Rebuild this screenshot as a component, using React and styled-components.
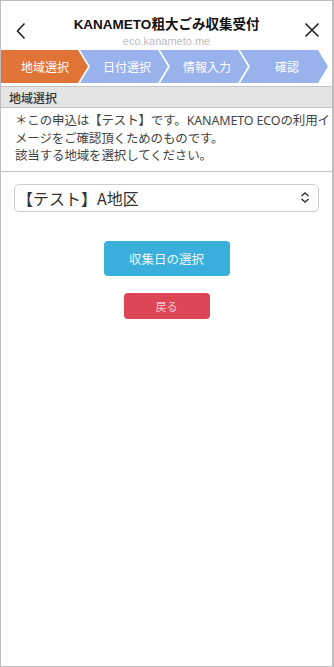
import React from "react";
import styled, { createGlobalStyle } from "styled-components";

const Global = createGlobalStyle`
  html, body { margin: 0; padding: 0; background: #fff; }
  * { box-sizing: border-box; }
  body { font-family: "Noto Sans", "Noto Sans CJK JP", sans-serif; }
`;

const Frame = styled.div`
  width: 334px;
  height: 667px;
  border: 1px solid #bdbdbd;
  border-right-width: 2px;
  display: flex;
  flex-direction: column;
  overflow: hidden;
`;

const Header = styled.header`
  height: 49px;
  display: grid;
  grid-template-columns: 40px 1fr 40px;
  align-items: start;
`;

const IconBtn = styled.div`
  display: flex;
  align-items: center;
  justify-content: center;
  padding-top: 21px;
  padding-left: ${(p) => p.$pl || 0}px;
`;

const TitleBox = styled.div`
  display: flex;
  flex-direction: column;
  align-items: center;
  padding-top: 16px;
`;

const Title = styled.div`
  font-family: "Liberation Sans", "Noto Sans CJK JP", sans-serif;
  font-weight: 700;
  font-size: 13.5px;
  color: #111;
  line-height: 16px;
`;

const Sub = styled.div`
  font-family: "Liberation Sans", sans-serif;
  font-size: 11px;
  color: #bdbdbd;
  line-height: 14px;
  margin-top: 1px;
`;

const Steps = styled.div`
  display: flex;
  height: 33px;
  margin-left: -1px;
`;

const Step = styled.div`
  width: 88px;
  height: 100%;
  flex: none;
  margin-left: ${(p) => (p.$first ? 0 : -8)}px;
  background: ${(p) => (p.$active ? "#e07336" : "#98b2ec")};
  clip-path: ${(p) =>
    p.$first
      ? "polygon(0 0, 78px 0, 88px 50%, 78px 100%, 0 100%)"
      : "polygon(0 0, 78px 0, 88px 50%, 78px 100%, 0 100%, 10px 50%)"};
  color: #fff;
  font-size: 12px;
  font-family: "Noto Sans CJK JP", sans-serif;
  display: flex;
  align-items: center;
  justify-content: center;
  padding-left: ${(p) => (p.$first ? 2 : 6)}px;
`;

const SectionHead = styled.div`
  margin-top: 3px;
  height: 22px;
  background: #e4e4e4;
  border-top: 1px solid #c4c4c4;
  border-bottom: 1px solid #c4c4c4;
  font-family: "Noto Sans CJK JP", sans-serif;
  font-size: 12px;
  color: #333;
  font-weight: 500;
  padding-left: 8px;
  display: flex;
  align-items: center;
`;

const Notice = styled.div`
  padding: 4px 0 6px 14px;
  font-size: 12.5px;
  line-height: 17.5px;
  letter-spacing: -0.15px;
  color: #444;
  border-bottom: 1px solid #c4c4c4;
  font-family: "Noto Sans", "Noto Sans CJK JP", sans-serif;
`;

const Body = styled.div`
  padding: 12px 13px 0 13px;
  display: flex;
  flex-direction: column;
  align-items: center;
`;

const Select = styled.div`
  width: 100%;
  height: 28px;
  border: 1px solid #cfcfcf;
  border-radius: 5px;
  display: flex;
  align-items: center;
  justify-content: space-between;
  padding: 0 8px 0 2px;
  font-family: "Noto Sans CJK JP", sans-serif;
  font-size: 16px;
  color: #333;
`;

const Button = styled.div`
  width: ${(p) => p.$w}px;
  height: ${(p) => p.$h}px;
  margin-top: ${(p) => p.$mt}px;
  background: ${(p) => p.$bg};
  border-radius: 4px;
  display: flex;
  align-items: center;
  justify-content: center;
  color: ${(p) => p.$fg};
  font-size: ${(p) => p.$fs}px;
  font-family: "Noto Sans CJK JP", sans-serif;
`;

export default function App() {
  return (
    <>
      <Global />
      <Frame>
        <Header>
          <IconBtn $pl={0}>
            <svg width="12" height="18" viewBox="0 0 12 18">
              <path d="M9.5 1.5 L2.5 9 L9.5 16.5" fill="none" stroke="#222" strokeWidth="1.6" />
            </svg>
          </IconBtn>
          <TitleBox>
            <Title>KANAMETO粗大ごみ収集受付</Title>
            <Sub>eco.kanameto.me</Sub>
          </TitleBox>
          <IconBtn>
            <svg width="16" height="16" viewBox="0 0 16 16">
              <path d="M1.5 1.5 L14.5 14.5 M14.5 1.5 L1.5 14.5" fill="none" stroke="#222" strokeWidth="1.6" />
            </svg>
          </IconBtn>
        </Header>
        <Steps>
          <Step $first $active>地域選択</Step>
          <Step>日付選択</Step>
          <Step>情報入力</Step>
          <Step>確認</Step>
        </Steps>
        <SectionHead>地域選択</SectionHead>
        <Notice>
          ＊この申込は【テスト】です。KANAMETO ECOの利用イメージをご確認頂くためのものです。
          <br />
          該当する地域を選択してください。
        </Notice>
        <Body>
          <Select>
            <span>【テスト】A地区</span>
            <svg width="10" height="11" viewBox="0 0 10 11">
              <path d="M1.5 4 L5 1 L8.5 4 M1.5 7 L5 10 L8.5 7" fill="none" stroke="#333" strokeWidth="1.5" />
            </svg>
          </Select>
          <Button $w={126} $h={35} $mt={29} $bg="#3aafdc" $fg="#eaf6fb" $fs={12.5}>
            収集日の選択
          </Button>
          <Button $w={86} $h={26} $mt={17} $bg="#dc4657" $fg="#f6c9cf" $fs={11}>
            戻る
          </Button>
        </Body>
      </Frame>
    </>
  );
}
